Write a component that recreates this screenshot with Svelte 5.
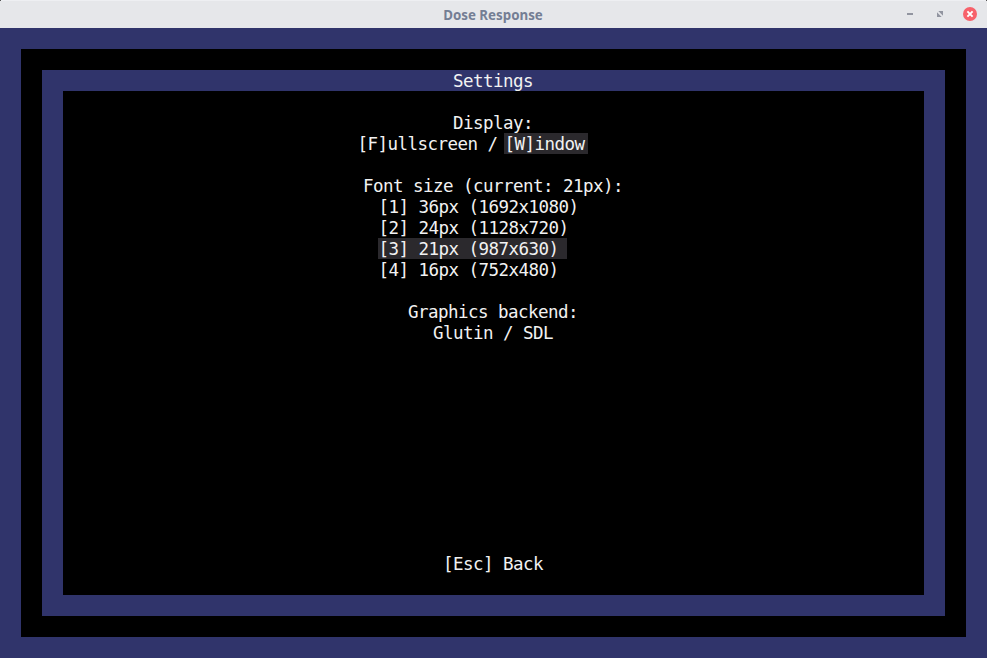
<script>
  const sizes = [
    { key: 1, label: '36px (1692x1080)' },
    { key: 2, label: '24px (1128x720)' },
    { key: 3, label: '21px (987x630)' },
    { key: 4, label: '16px (752x480)' },
  ];
  let selected = $state(3);
</script>

<div class="window">
  <header>
    <i class="corner"></i>
    <h1>Dose Response</h1>
    <i class="corner"></i>
    <div class="controls">
      <svg width="14" height="14" viewBox="0 0 14 14"><path d="M4 6h6v2H4z" fill="#9295a0" /></svg>
      <svg width="14" height="14" viewBox="0 0 14 14"><path d="M5.3 4H10v4.7zM4 5.3L8.7 10H4z" fill="#9295a0" /></svg>
      <svg width="14" height="14" viewBox="0 0 14 14"><circle cx="7" cy="7" r="7" fill="#f7616a" /><path d="M4.4 4.4l5.2 5.2M9.6 4.4L4.4 9.6" stroke="#fff" stroke-width="1.9" /></svg>
    </div>
  </header>
  <main>
    <div class="outer">
      <div class="frame">
        <h2>Settings</h2>
        <section>
          <div class="row">Display:</div>
          <div class="row display"><span class="full">[F]ullscreen /</span><span class="active win">[W]indow</span></div>
          <div class="row gap">Font size (current: 21px):</div>
          <div class="sizes">
            {#each sizes as size}
              <div class="row" class:active={size.key === selected}>[{size.key}] {size.label}</div>
            {/each}
          </div>
          <div class="row gap">Graphics backend:</div>
          <div class="row">Glutin / SDL</div>
          <footer class="row">[Esc] Back</footer>
        </section>
      </div>
    </div>
  </main>
</div>

<style>
  .window { width: 987px; height: 658px; overflow: hidden; display: flex; flex-direction: column; }
  header { height: 28px; box-sizing: border-box; position: relative; display: flex; justify-content: space-between; background: #e6e7ea; border-top: 1px solid #eeeff2; }
  .corner { width: 1px; height: 1px; margin-top: -1px; background: #555; }
  h1 { margin: 0; padding-right: 1px; font: 700 13.33px/29px "Noto Sans", sans-serif; color: #747e94; white-space: nowrap; }
  .controls { position: absolute; right: 10px; top: 6px; display: flex; gap: 16px; }
  main { flex: 1; box-sizing: border-box; padding: 21px; background: #30346b; display: flex; }
  .outer { flex: 1; padding: 21px; background: #000; display: flex; }
  .frame { flex: 1; padding: 0 21px 21px; background: #30346b; display: flex; flex-direction: column; }
  h2, .row { margin: 0; height: 21px; padding-right: 1px; font: 400 17.5px/23px "DejaVu Sans Mono", monospace; letter-spacing: -0.535px; color: #f2f2f2; white-space: pre; text-align: center; }
  section { flex: 1; display: flex; flex-direction: column; padding: 21px 0; background: #000; }
  .display { display: flex; padding-left: 294px; }
  .full { width: 147px; text-align: left; text-indent: 0.5px; }
  .win { width: 84px; height: 21px; text-align: left; text-indent: 0.5px; }
  .gap { margin-top: 21px; }
  .sizes { margin-left: 315px; display: flex; flex-direction: column; align-items: flex-start; }
  .sizes .row { padding-right: 0; text-indent: 0.6px; }
  .active { background: #2b292d; }
  .sizes .active { width: 189px; text-align: left; }
  footer.row { margin-top: auto; }
</style>
